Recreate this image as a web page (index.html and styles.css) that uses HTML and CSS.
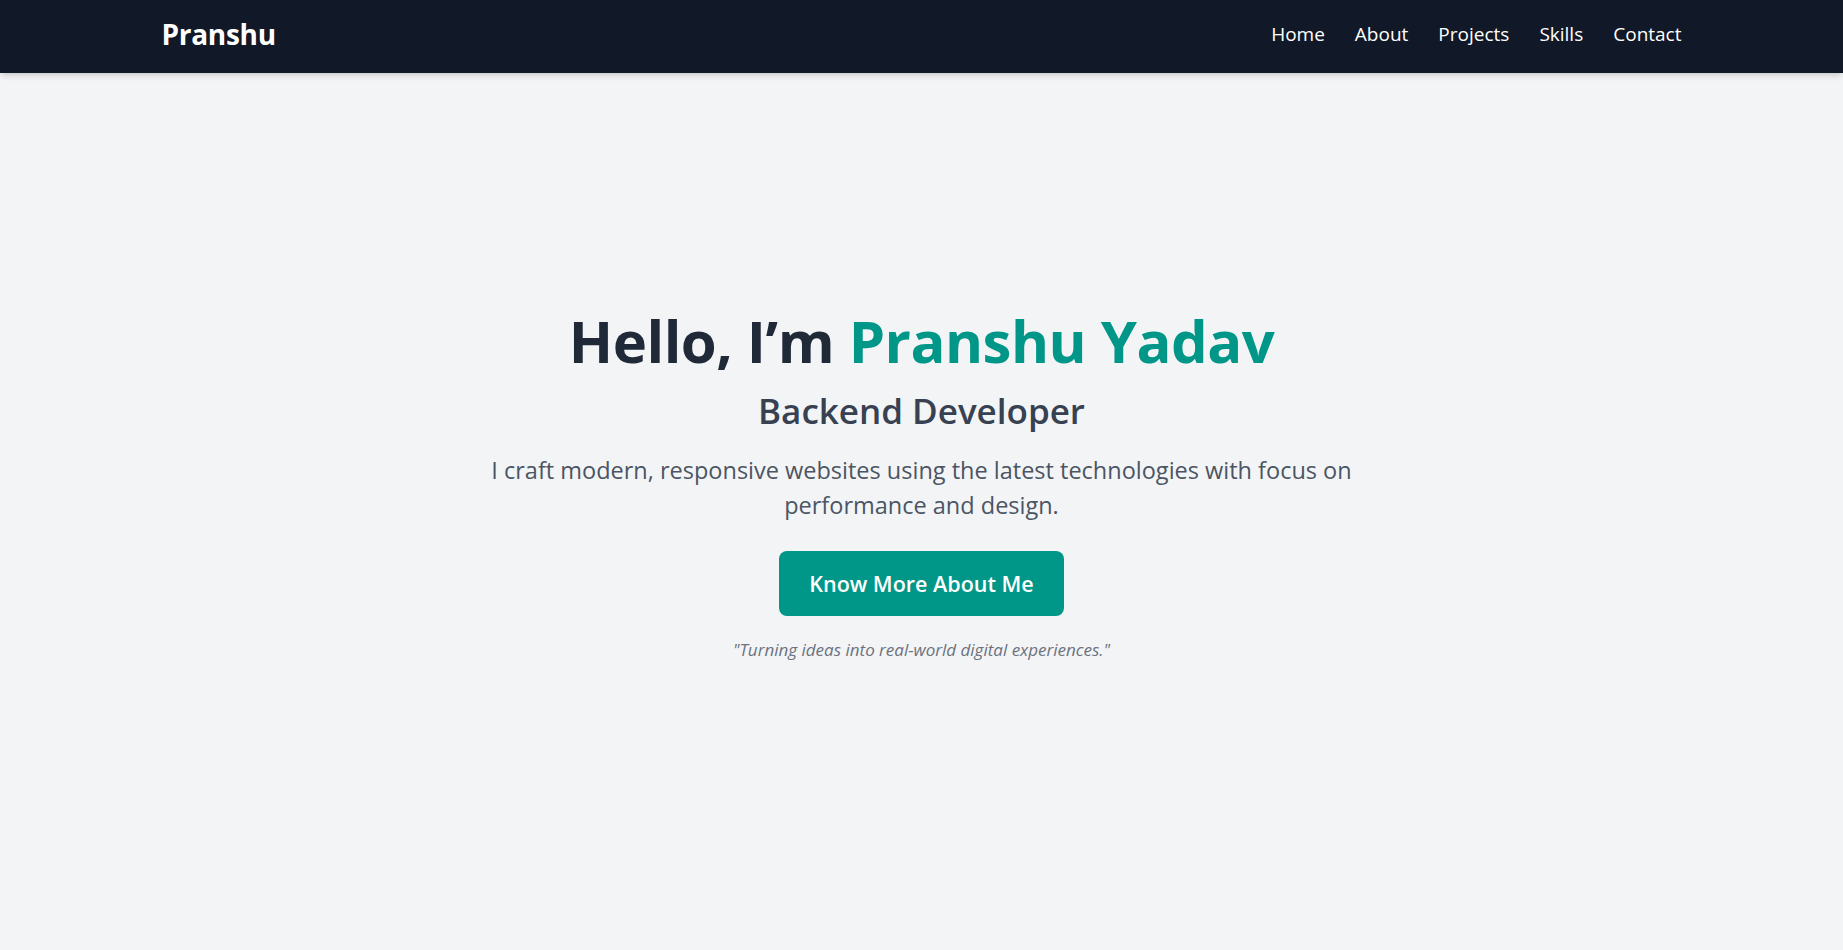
FILE: index.html
```html
<!DOCTYPE html>
<html lang="en">
<head>
<meta charset="utf-8">
<title>Pranshu Yadav</title>
<link rel="stylesheet" href="styles.css">
</head>
<body>
<header class="nav">
  <div class="container nav-inner">
    <a class="logo" href="#">Pranshu</a>
    <nav class="links">
      <a href="#">Home</a>
      <a href="#">About</a>
      <a href="#">Projects</a>
      <a href="#">Skills</a>
      <a href="#">Contact</a>
    </nav>
  </div>
</header>
<main class="hero">
  <div class="hero-inner">
    <h1 class="title">Hello, I’m <span class="accent">Pranshu Yadav</span></h1>
    <h2 class="subtitle">Backend Developer</h2>
    <p class="lead">I craft modern, responsive websites using the latest technologies with focus on performance and design.</p>
    <a class="btn" href="#">Know More About Me</a>
    <p class="quote">"Turning ideas into real-world digital experiences."</p>
  </div>
</main>
</body>
</html>
```
FILE: styles.css
```css
* { box-sizing: border-box; }
html, body { margin: 0; padding: 0; }
body {
  background: #f3f4f6;
  font-family: "Open Sans", "Noto Sans", sans-serif;
  color: #1f2937;
  min-height: 100vh;
}
a { text-decoration: none; color: inherit; }

.nav {
  background: #111827;
  height: 73px;
  box-shadow: 0 4px 6px -1px rgba(0,0,0,0.12), 0 2px 4px -2px rgba(0,0,0,0.1);
  position: relative;
  z-index: 2;
}
.container {
  max-width: 1536px;
  margin: 0 auto;
  padding: 0 8px;
}
.nav-inner {
  height: 100%;
  display: flex;
  align-items: center;
  justify-content: space-between;
  padding-bottom: 6px;
}
.logo {
  color: #ffffff;
  font-size: 28px;
  font-weight: 700;
  letter-spacing: -0.3px;
}
.links {
  display: flex;
  gap: 30px;
}
.links a {
  color: #ffffff;
  font-size: 19px;
}

.hero {
  padding: 236px 16px 0;
  display: flex;
  justify-content: center;
}
.hero-inner {
  max-width: 900px;
  display: flex;
  flex-direction: column;
  align-items: center;
  text-align: center;
}
.title {
  margin: 0;
  font-size: 58px;
  line-height: 1.1;
  font-weight: 700;
  color: #1f2937;
  letter-spacing: -0.5px;
}
.accent { color: #009688; }
.subtitle {
  margin: 18px 0 0;
  font-size: 35px;
  line-height: 40px;
  font-weight: 600;
  color: #374151;
}
.lead {
  margin: 22px 0 0;
  font-size: 23.5px;
  line-height: 35px;
  color: #4b5563;
}
.btn {
  margin-top: 28px;
  background: #009688;
  color: #ffffff;
  font-size: 21.5px;
  font-weight: 600;
  padding: 14px 30px;
  border-radius: 8px;
  line-height: 37px;
}
.quote {
  margin: 22px 0 0;
  font-size: 17px;
  font-style: italic;
  color: #6b7280;
}
```
